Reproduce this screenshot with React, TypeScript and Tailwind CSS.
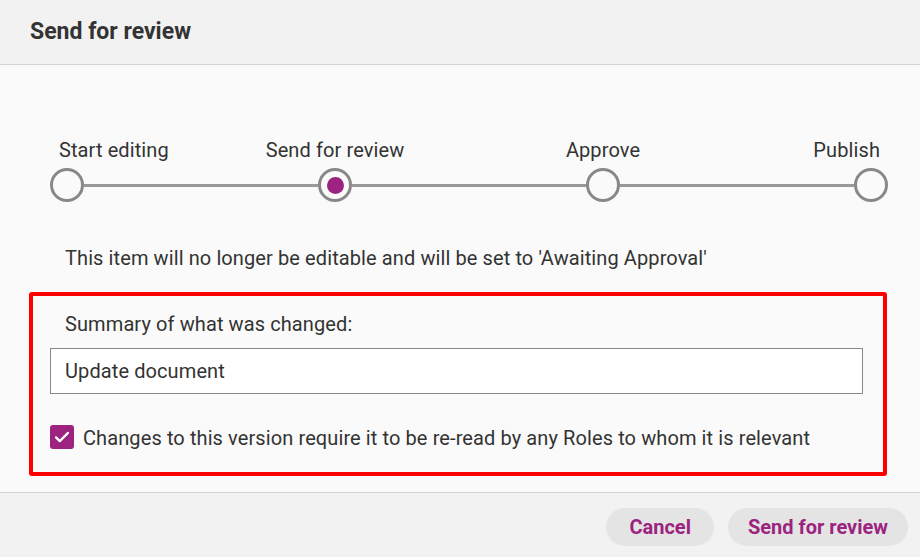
import React from "react";

const PURPLE = "#9c2480";

function Step({ label, active, align }: { label: string; active?: boolean; align: "start" | "center" | "end" }) {
  const alignCls = align === "start" ? "items-start" : align === "end" ? "items-end" : "items-center";
  const labelCls = align === "start" ? "ml-[9px]" : align === "end" ? "mr-[8px]" : "";
  return (
    <div className={`flex flex-col ${alignCls} w-[34px] shrink-0`}>
      <span className={`whitespace-nowrap text-[20px] leading-[24px] tracking-[0.1px] text-[#333] ${labelCls}`}>{label}</span>
      <div className="mt-[6px] w-[34px] h-[34px] rounded-full border-[3px] border-[#888] bg-[#fafafa] flex items-center justify-center">
        {active && <div className="w-[17px] h-[17px] rounded-full bg-[#9c2480]" />}
      </div>
    </div>
  );
}

function Line() {
  return <div className="flex-1 h-[3px] bg-[#999] mb-[15px]" />;
}

export default function App() {
  return (
    <div
      className="w-[920px] h-[557px] flex flex-col bg-[#fafafa] text-[#333]"
      style={{ fontFamily: "Roboto, 'Liberation Sans', sans-serif" }}
    >
      <div className="h-[65px] shrink-0 bg-[#f2f2f2] border-b border-[#d4d4d4] flex items-center pl-[30px]">
        <h1 className="text-[23px] leading-[28px] font-bold text-[#333]">Send for review</h1>
      </div>
      <div className="flex-1 pt-[73px] pl-[50px] pr-[32px]">
        <div className="flex items-end">
          <Step label="Start editing" align="start" />
          <Line />
          <Step label="Send for review" align="center" active />
          <Line />
          <Step label="Approve" align="center" />
          <Line />
          <Step label="Publish" align="end" />
        </div>
        <p className="mt-[44px] ml-[15px] text-[20px] leading-[24px] tracking-[0.1px] text-[#333]">
          This item will no longer be editable and will be set to 'Awaiting Approval'
        </p>
      </div>
      <div className="ml-[29px] mr-[33px] mb-[16px] border-[4px] border-[#ff0000] rounded-[3px] pl-[17px] pr-[20px] pt-[16px] pb-[22px]">
        <div className="text-[20px] leading-[24px] tracking-[0.1px] ml-[15px] text-[#333]">Summary of what was changed:</div>
        <div className="mt-[12px] h-[46px] bg-white border border-[#888] flex items-center pl-[14px] text-[20px] tracking-[0.1px] text-[#333]">
          Update document
        </div>
        <label className="mt-[32px] flex items-center gap-[9px]">
          <span className="w-[24px] h-[24px] rounded-[3px] bg-[#9c2480] flex items-center justify-center shrink-0 -mt-[3px]">
            <svg width="18" height="18" viewBox="0 0 24 24" fill="none" stroke="white" strokeWidth="3" strokeLinecap="round" strokeLinejoin="round">
              <path d="M4 12.5l5 5L20 6.5" />
            </svg>
          </span>
          <span className="text-[20px] leading-[24px] tracking-[0.1px] text-[#333] whitespace-nowrap">
            Changes to this version require it to be re-read by any Roles to whom it is relevant
          </span>
        </label>
      </div>
      <div className="h-[65px] shrink-0 bg-[#f2f2f2] border-t border-[#d4d4d4] flex items-center justify-end gap-[14px] pr-[12px] pt-[3px]">
        <button className="h-[38px] px-[23px] rounded-full bg-[#e4e4e4] text-[20px] font-bold" style={{ color: PURPLE }}>
          Cancel
        </button>
        <button className="h-[38px] px-[20px] rounded-full bg-[#e4e4e4] text-[20px] font-bold" style={{ color: PURPLE }}>
          Send for review
        </button>
      </div>
    </div>
  );
}
